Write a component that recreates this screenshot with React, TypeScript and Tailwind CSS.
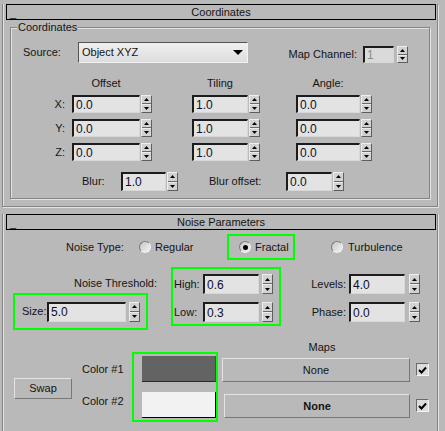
import React from 'react';

// 3ds Max style "Noise" map parameters panel

function Spinner({ className = '' }: { className?: string }) {
  return (
    <div
      className={`w-[11px] self-stretch flex flex-col bg-[#d2d2d2] border border-t-[#eeeeee] border-l-[#eeeeee] border-b-[#5e5e5e] border-r-[#5e5e5e] ${className}`}
    >
      <div className="flex-1 flex items-center justify-center border-b border-b-[#6a6a6a]">
        <svg width="5" height="3" viewBox="0 0 5 3">
          <path d="M2.5 0L5 3H0Z" fill="#000" />
        </svg>
      </div>
      <div className="flex-1 flex items-center justify-center border-t border-t-[#ececec]">
        <svg width="5" height="3" viewBox="0 0 5 3">
          <path d="M0 0H5L2.5 3Z" fill="#000" />
        </svg>
      </div>
    </div>
  );
}

function Box({ value, className = '', disabled }: { value: string; className?: string; disabled?: boolean }) {
  return (
    <div
      className={`h-full flex items-center pl-[2px] text-[12px] leading-none border-t-2 border-l-2 border-t-[#1c1c1c] border-l-[#1c1c1c] border-b border-r border-b-[#d8d8d8] border-r-[#d8d8d8] ${
        disabled ? 'bg-[#dadada] text-[#8c8c8c]' : 'bg-[#e3e3e3] text-[#0c0c2c]'
      } ${className}`}
    >
      {value}
    </div>
  );
}

function Radio({ on }: { on?: boolean }) {
  return (
    <span className="w-[12px] h-[12px] shrink-0 rounded-full flex items-center justify-center bg-linear-to-br from-[#c8c8c8] to-[#f2f2f2] border border-t-[#7a7a7a] border-l-[#7a7a7a] border-b-[#f0f0f0] border-r-[#f0f0f0]">
      {on && <span className="w-[5px] h-[5px] rounded-full bg-black" />}
    </span>
  );
}

function Check() {
  return (
    <div className="w-[13px] h-[13px] bg-[#dcdcdc] border border-t-[#6a6a6a] border-l-[#6a6a6a] border-b-[#f4f4f4] border-r-[#f4f4f4] flex items-center justify-center">
      <svg width="9" height="8" viewBox="0 0 9 8">
        <path d="M1 4L3.5 6.5L8 1.5" stroke="#000" strokeWidth="2" fill="none" />
      </svg>
    </div>
  );
}

function RolloutHeader({ title }: { title: string }) {
  return (
    <div className="-mt-[8px] ml-[3px] w-[430px] h-[16px] border border-black flex items-center bg-[#b9b9b9]">
      <span className="w-[16px] pl-[3px] self-end leading-[12px]">_</span>
      <span className="flex-1 text-center leading-none">{title}</span>
      <span className="w-[16px]" />
    </div>
  );
}

const btn =
  'flex items-center justify-center bg-[#b9b9b9] border border-t-[#e4e4e4] border-l-[#e4e4e4] border-b-[#777777] border-r-[#777777]';

export default function App() {
  const xyz = [
    { axis: 'X:', off: '0.0', til: '1.0', ang: '0.0', mt: 'mt-[5px]' },
    { axis: 'Y:', off: '0.0', til: '1.0', ang: '0.0', mt: 'mt-[6px]' },
    { axis: 'Z:', off: '0.0', til: '1.0', ang: '0.0', mt: 'mt-[6px]' },
  ];

  return (
    <div className="w-[445px] h-[431px] overflow-hidden bg-[#b9b9b9] pt-[12px] text-[11px] text-[#141414] font-['Liberation_Sans',Arial,sans-serif]">
      {/* Coordinates rollout */}
      <div className="ml-[2px] w-[436px] border-l border-r border-b border-[#858585] shadow-[inset_1px_0_0_#e2e2e2,1px_1px_0_#e2e2e2]">
        <RolloutHeader title="Coordinates" />

        <div className="relative ml-[7px] mt-[7px] mb-[7px] w-[420px] h-[172px] border border-[#858585] shadow-[inset_1px_1px_0_#e2e2e2,1px_1px_0_#e2e2e2]">
          <span className="absolute left-[6px] -top-[8px] px-[1px] bg-[#b9b9b9] leading-[14px]">Coordinates</span>

          <div className="mt-[14px] flex items-end h-[21px]">
            <div className="ml-[12px] w-[55px] h-[21px] flex items-center">Source:</div>
            <div className="w-[170px] h-[21px] flex items-center pl-[3px] pr-[4px] bg-linear-to-b from-[#f0f0f0] to-[#dddddd] border border-t-[#555555] border-l-[#555555] border-b-[#f2f2f2] border-r-[#f2f2f2]">
              <span className="flex-1 text-[11px]">Object XYZ</span>
              <svg width="10" height="5" viewBox="0 0 10 5">
                <path d="M0 0H10L5 5Z" fill="#000" />
              </svg>
            </div>
            <div className="w-[115px] h-[17px] flex items-center justify-end pr-[6px]">Map Channel:</div>
            <div className="flex h-[17px]">
              <Box value="1" disabled className="w-[31px]" />
              <Spinner className="ml-[3px]" />
            </div>
          </div>

          <div className="mt-[13px] h-[14px] flex items-center">
            <div className="w-[61px]" />
            <div className="w-[68px] text-center">Offset</div>
            <div className="w-[52px]" />
            <div className="w-[56px] text-center">Tiling</div>
            <div className="w-[48px]" />
            <div className="w-[64px] text-center">Angle:</div>
          </div>

          {xyz.map((r) => (
            <div key={r.axis} className={`${r.mt} h-[18px] flex items-center`}>
              <div className="w-[61px] text-right pr-[7px]">{r.axis}</div>
              <Box value={r.off} className="w-[68px]" />
              <Spinner className="ml-[1px]" />
              <Box value={r.til} className="ml-[40px] w-[56px]" />
              <Spinner className="ml-[1px]" />
              <Box value={r.ang} className="ml-[36px] w-[64px]" />
              <Spinner className="ml-[1px]" />
            </div>
          ))}

          <div className="mt-[11px] h-[19px] flex items-center">
            <div className="ml-[71px] w-[39px]">Blur:</div>
            <Box value="1.0" className="w-[45px]" />
            <Spinner className="ml-[1px]" />
            <div className="ml-[31px] w-[77px]">Blur offset:</div>
            <Box value="0.0" className="w-[46px]" />
            <Spinner className="ml-[1px]" />
          </div>
        </div>
      </div>

      {/* Noise Parameters rollout */}
      <div className="mt-[15px] ml-[2px] w-[436px] h-[230px] border-l border-r border-[#858585] shadow-[inset_1px_0_0_#e2e2e2,1px_0_0_#e2e2e2]">
        <RolloutHeader title="Noise Parameters" />

        <div className="mt-[4px] h-[26px] flex items-center">
          <div className="ml-[63px] w-[73px]">Noise Type:</div>
          <div className="w-[88px] flex items-center">
            <Radio />
            <span className="ml-[4px]">Regular</span>
          </div>
          <div className="w-[68px] h-[26px] border-2 border-[#00ff00] flex items-center pl-[10px]">
            <Radio on />
            <span className="ml-[4px]">Fractal</span>
          </div>
          <div className="ml-[36px] flex items-center">
            <Radio />
            <span className="ml-[5px]">Turbulence</span>
          </div>
        </div>

        <div className="mt-[7px] flex items-start">
          <div className="w-[168px]">
            <div className="mt-[6px] h-[20px] flex items-center justify-end pr-[14px]">Noise Threshold:</div>
            <div className="ml-[10px] w-[135px] h-[37px] border-2 border-[#00ff00] flex items-center pl-[7px]">
              <div className="w-[25px]">Size:</div>
              <div className="flex h-[20px]">
                <Box value="5.0" className="w-[79px]" />
                <Spinner className="ml-[3px]" />
              </div>
            </div>
          </div>

          <div className="w-[110px] h-[59px] border-2 border-[#00ff00]">
            <div className="mt-[5px] h-[20px] flex items-center">
              <div className="ml-[1px] w-[29px]">High:</div>
              <Box value="0.6" className="w-[56px]" />
              <Spinner className="ml-[3px]" />
            </div>
            <div className="mt-[8px] h-[20px] flex items-center">
              <div className="ml-[1px] w-[29px]">Low:</div>
              <Box value="0.3" className="w-[56px]" />
              <Spinner className="ml-[3px]" />
            </div>
          </div>

          <div>
            <div className="mt-[7px] h-[20px] flex items-center">
              <div className="w-[68px] text-right pr-[3px]">Levels:</div>
              <Box value="4.0" className="w-[56px]" />
              <Spinner className="ml-[4px]" />
            </div>
            <div className="mt-[8px] h-[20px] flex items-center">
              <div className="w-[68px] text-right pr-[3px]">Phase:</div>
              <Box value="0.0" className="w-[56px]" />
              <Spinner className="ml-[4px]" />
            </div>
          </div>
        </div>

        <div className="mt-[10px] flex items-start">
          <div className={`ml-[11px] mt-[38px] w-[58px] h-[21px] ${btn}`}>Swap</div>

          <div className="ml-[10px] w-[50px]">
            <div className="mt-[22px] h-[14px] leading-[14px]">Color #1</div>
            <div className="mt-[18px] h-[14px] leading-[14px]">Color #2</div>
          </div>

          <div className="mt-[12px] w-[86px] h-[70px] border-2 border-[#00ff00] pl-[8px] pt-[2px]">
            <div className="w-[74px] h-[26px] bg-[#636363] border-b border-r border-b-[#2a2a2a] border-r-[#4a4a4a]" />
            <div className="mt-[10px] w-[74px] h-[26px] bg-[#f2f2f2] border-b border-r border-black" />
          </div>

          <div className="ml-[4px]">
            <div className="w-[188px] h-[14px] pl-[12px] text-center leading-[14px]">Maps</div>
            <div className={`mt-[4px] w-[188px] h-[24px] ${btn}`}>None</div>
            <div className={`mt-[12px] ml-[2px] w-[186px] h-[24px] font-bold ${btn}`}>None</div>
          </div>

          <div className="ml-[6px]">
            <div className="mt-[23px]">
              <Check />
            </div>
            <div className="mt-[23px]">
              <Check />
            </div>
          </div>
        </div>
      </div>
    </div>
  );
}
